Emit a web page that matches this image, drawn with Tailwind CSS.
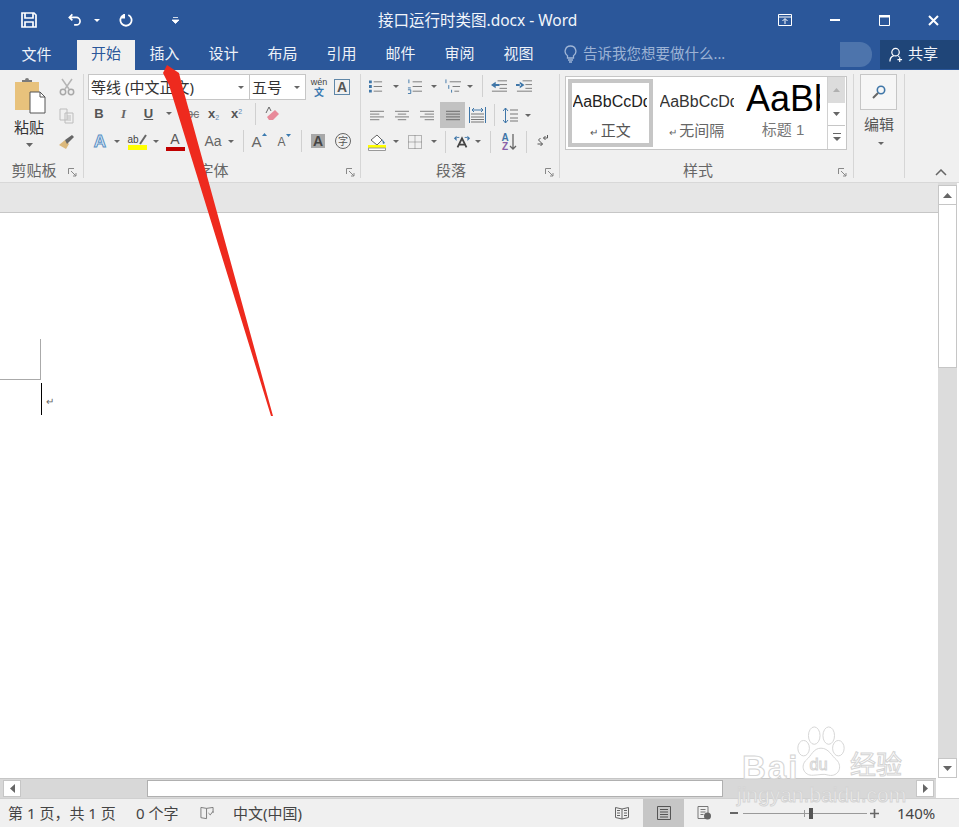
<!DOCTYPE html>
<html lang="zh-CN">
<head>
<meta charset="UTF-8">
<title>接口运行时类图.docx - Word</title>
<script src="https://cdn.jsdelivr.net/npm/@tailwindcss/browser@4"></script>
</head>
<body class="bg-white font-['Noto_Sans','Noto_Sans_CJK_SC',sans-serif]">
<div class="relative w-[959px] h-[827px] overflow-hidden flex flex-col">

  <!-- Title bar -->
  <header class="h-[40px] bg-[#2b579a] flex items-center text-white shrink-0 relative">
    <div class="w-[58px] flex justify-center">
      <svg width="16" height="16" viewBox="0 0 16 16"><path d="M1 1h12l2 2v12H1z" fill="none" stroke="#fff" stroke-width="1.7"/><path d="M4 1v5h8V1M4 15v-5h8v5" fill="none" stroke="#fff" stroke-width="1.7"/></svg>
    </div>
    <svg class="ml-[10px]" width="14" height="14" viewBox="0 0 16 15"><path d="M5 1 1.500 4.500 5 8M2 4.500h7.500a4.300 4.300 0 0 1 0 8.600H7" fill="none" stroke="#fff" stroke-width="1.900"/></svg>
    <svg class="ml-[12px]" width="6" height="3"><path d="M0 0h6L3 3z" fill="#fff"/></svg>
    <svg class="ml-[19px]" width="14" height="14" viewBox="0 0 15 15"><path d="M5 2.200A6 6 0 1 0 10 2.200M5.500 1v4H1.500" fill="none" stroke="#fff" stroke-width="1.900"/></svg>
    <svg class="ml-[39px]" width="7" height="7" viewBox="0 0 7 7"><path d="M1 .5h5M0 3h7L3.500 6.500z" stroke="#fff" stroke-width=".8" fill="#fff"/></svg>
    <div class="absolute left-[378px] top-[10px] text-[15.5px] leading-[20px] whitespace-nowrap text-[#f2f5fa]">接口运行时类图.docx - Word</div>
    <div class="ml-auto flex items-center">
      <div class="w-[50px] flex justify-center">
        <svg width="14" height="12" viewBox="0 0 14 12"><path d="M.500.500h13v11H.500zM.500 3h13" fill="none" stroke="#fff"/><path d="M7 10V5M4.500 7 7 4.500 9.500 7" fill="none" stroke="#fff"/></svg>
      </div>
      <div class="w-[49px] flex justify-center"><div class="w-[10px] h-[2px] bg-white"></div></div>
      <div class="w-[50px] flex justify-center">
        <svg width="11" height="11" viewBox="0 0 11 11"><path d="M.500.500h10v10H.500z" fill="none" stroke="#fff"/><path d="M0 0h11v2.500H0z" fill="#fff"/></svg>
      </div>
      <div class="w-[50px] pr-[2px] flex justify-center">
        <svg width="11" height="11" viewBox="0 0 11 11"><path d="M1 1l9 9M10 1l-9 9" stroke="#fff" stroke-width="2"/></svg>
      </div>
    </div>
  </header>

  <!-- Tabs -->
  <nav class="h-[30px] bg-[#2b579a] flex items-stretch text-[15px] text-[#eef2f8] shrink-0 relative">
    <div class="w-[7px]"></div>
    <div class="w-[59px] flex items-center justify-center pb-[1px]">文件</div>
    <div class="w-[11px]"></div>
    <div class="w-[58px] bg-[#f0f0f0] text-[#2b579a] flex items-center justify-center pb-[4px]">开始</div>
    <div class="w-[59px] flex items-center justify-center pb-[4px]">插入</div>
    <div class="w-[59px] flex items-center justify-center pb-[4px]">设计</div>
    <div class="w-[59px] flex items-center justify-center pb-[4px]">布局</div>
    <div class="w-[59px] flex items-center justify-center pb-[4px]">引用</div>
    <div class="w-[59px] flex items-center justify-center pb-[4px]">邮件</div>
    <div class="w-[59px] flex items-center justify-center pb-[4px]">审阅</div>
    <div class="w-[59px] flex items-center justify-center pb-[4px]">视图</div>
    <div class="w-[29px] flex items-center justify-end pb-[3px]">
      <svg width="13" height="18" viewBox="0 0 13 18"><path d="M6.500 1a5.300 5.300 0 0 0-3 9.700V13h6v-2.300a5.300 5.300 0 0 0-3-9.700zM4 15h5M5 17h3" fill="none" stroke="#9fb5d6" stroke-width="1.300"/></svg>
    </div>
    <div class="ml-[6px] text-[#9db3d5] flex items-center pb-[3px] text-[14.5px] whitespace-nowrap">告诉我您想要做什么...</div>
    <div class="absolute left-[840px] top-[2px] w-[32px] h-[25px] bg-[#4d74ac] rounded-r-[12px]"></div>
    <div class="absolute left-[880px] top-0 w-[79px] h-[29px] bg-[#1f4578] flex items-center pl-[9px] gap-[5px] text-[15px] text-[#f2f5fa]">
      <svg width="14" height="16" viewBox="0 0 15 16"><circle cx="7" cy="5" r="4" fill="none" stroke="#fff" stroke-width="1.300"/><path d="M1 15c0-3 2-5.500 4-6M10 9l1 1M9 13h5M11.500 10.500v5" fill="none" stroke="#fff" stroke-width="1.300"/></svg>
      <span class="pb-[2px]">共享</span>
    </div>
  </nav>

  <!-- Ribbon -->
  <div class="h-[112px] bg-[#f0f0f0] flex text-[#444] shrink-0">

    <!-- Clipboard -->
    <section class="w-[84px] h-[104px] mt-[4px] border-r border-[#d6d6d6] flex flex-col">
      <div class="flex h-[78px] shrink-0">
        <div class="w-[58px] flex flex-col items-center">
          <svg class="ml-[2px] mt-[4px]" width="32" height="36" viewBox="0 0 32 36"><path d="M1 4h24v28H1z" fill="#e8c27c"/><path d="M8 4h10V2h-3a2 2 0 0 0-4 0H8z" fill="#7b7b7b"/><path d="M16 14h10l5 5v16H16z" fill="#fff" stroke="#555"/><path d="M26 14v5h5" fill="none" stroke="#555"/></svg>
          <div class="text-[15px] leading-[18px] mt-[4px] text-[#333]">粘贴</div>
          <svg class="mt-[7px]" width="7" height="4"><path d="M0 0h7L3.500 4z" fill="#666"/></svg>
        </div>
        <div class="w-[17px] flex flex-col items-center pt-[4px] gap-[12px]">
          <svg width="16" height="18" viewBox="0 0 16 18"><path d="M3 1l7 10M13 1 6 11" stroke="#b5b5b5" stroke-width="1.500"/><circle cx="4" cy="14" r="2.700" fill="none" stroke="#a8a8a8" stroke-width="1.500"/><circle cx="12" cy="14" r="2.700" fill="none" stroke="#a8a8a8" stroke-width="1.500"/></svg>
          <svg width="16" height="16" viewBox="0 0 16 16"><path d="M1 1h7v11H1zM6 5h8v10H6z" fill="#f0f0f0" stroke="#bcbcbc"/><path d="M8 8h4M8 10h4M8 12h4" stroke="#bcbcbc"/></svg>
          <svg class="mt-[-1px]" width="17" height="15" viewBox="0 0 17 15"><path d="M1 10l6-5 4 4-3 5z" fill="#dcb97c"/><path d="M7 5l2 4 7-7-2-2z" fill="#666"/></svg>
        </div>
      </div>
      <div class="flex-1 min-h-0 flex items-start text-[15px] leading-[16px] text-[#666] pt-[10px]">
        <div class="flex-1 text-center">剪贴板</div>
        <svg class="mr-[6px] mt-[6px]" width="9" height="9" viewBox="0 0 9 9"><path d="M.500 6V.500H6M3 3l5 5M8 5v3H5" fill="none" stroke="#888"/></svg>
      </div>
    </section>

    <!-- Font -->
    <section class="w-[277px] h-[104px] mt-[4px] border-r border-[#d6d6d6] flex flex-col">
      <div class="h-[26px] shrink-0 flex items-center pl-[4px]">
        <div class="w-[162px] h-[26px] bg-white border border-[#c6c6c6] flex items-center justify-between pl-[2px] pr-[5px] text-[15px] text-[#333]">
          <span class="whitespace-nowrap">等线 (中文正文)</span>
          <svg width="6" height="3"><path d="M0 0h6L3 3z" fill="#666"/></svg>
        </div>
        <div class="w-[56px] h-[26px] bg-white border border-[#c6c6c6] border-l-0 flex items-center justify-between pl-[2px] pr-[5px] text-[15px] text-[#333]">
          <span>五号</span>
          <svg width="6" height="3"><path d="M0 0h6L3 3z" fill="#666"/></svg>
        </div>
        <div class="w-[24px] ml-[1px] flex flex-col items-center leading-none">
          <span class="text-[9px] text-[#444] font-['Liberation_Sans']">wén</span>
          <span class="text-[10px] text-[#3a7ab0] font-bold">文</span>
        </div>
        <div class="ml-[3px] w-[16px] h-[16px] border border-[#5f87a8] flex items-center justify-center text-[14px] font-bold text-[#555] font-['Liberation_Sans'] leading-none">A</div>
      </div>
      <div class="h-[27px] shrink-0 flex items-center pl-[3px] text-[#555] font-['Liberation_Sans']">
        <div class="w-[24px] text-center text-[13px] font-bold">B</div>
        <div class="w-[25px] text-center text-[13px] italic font-['Liberation_Serif'] font-bold text-[#666]">I</div>
        <div class="w-[25px] text-center text-[13px] font-bold underline">U</div>
        <div class="w-[16px] flex justify-center"><svg width="6" height="3"><path d="M0 0h6L3 3z" fill="#666"/></svg></div>
        <div class="w-[25px] text-center text-[12px] line-through text-[#777]">abc</div>
        <div class="w-[23px] text-center text-[13px] font-bold">x<sub class="text-[7px] text-[#5b87b5] font-normal">2</sub></div>
        <div class="w-[23px] text-center text-[13px] font-bold">x<sup class="text-[7px] text-[#5b87b5] font-normal">2</sup></div>
        <div class="w-[7px]"></div>
        <div class="w-px h-[22px] bg-[#d0d0d0]"></div>
        <div class="w-[32px] flex justify-center">
          <svg width="15" height="15" viewBox="0 0 15 15"><path d="M4 14l-2-3 8-7 4 4-6 6z" fill="#e88a9a"/><path d="M1 7l3-6 2 4" fill="none" stroke="#666"/></svg>
        </div>
      </div>
      <div class="h-[28px] shrink-0 flex items-center pl-[4px] text-[#555] font-['Liberation_Sans']">
        <div class="w-[24px] text-center text-[17px] font-bold leading-none text-[#e4eef8] [-webkit-text-stroke:1px_#5a90c4]">A</div>
        <div class="w-[10px] flex justify-center"><svg width="6" height="3"><path d="M0 0h6L3 3z" fill="#666"/></svg></div>
        <div class="w-[30px] flex flex-col items-center leading-none">
          <div class="flex items-end h-[12px]">
            <span class="text-[10px] text-[#444]">ab</span>
            <svg width="8" height="11" viewBox="0 0 8 11"><path d="M1 10 7 1" stroke="#666" stroke-width="2"/></svg>
          </div>
          <div class="w-[19px] h-[5px] bg-[#ffff00]"></div>
        </div>
        <div class="w-[8px] flex justify-center"><svg width="6" height="3"><path d="M0 0h6L3 3z" fill="#666"/></svg></div>
        <div class="w-[30px] flex flex-col items-center leading-none">
          <span class="text-[14px] h-[14px] text-[#555]">A</span>
          <div class="w-[19px] h-[4px] bg-[#c00000] mt-[1px]"></div>
        </div>
        <div class="w-[8px] flex justify-center"><svg width="6" height="3"><path d="M0 0h6L3 3z" fill="#666"/></svg></div>
        <div class="w-[30px] text-center text-[14px] text-[#666]">Aa</div>
        <div class="w-[6px] flex justify-center"><svg width="6" height="3"><path d="M0 0h6L3 3z" fill="#666"/></svg></div>
        <div class="w-[9px]"></div>
        <div class="w-px h-[22px] bg-[#d0d0d0]"></div>
        <div class="w-[30px] flex justify-center items-start text-[15px] text-[#666] leading-none">A<svg class="mt-[-1px]" width="5" height="3"><path d="M0 3h5L2.500 0z" fill="#3a7ab0"/></svg></div>
        <div class="w-[20px] flex justify-center items-start text-[12px] text-[#666] leading-none pt-[2px]">A<svg class="mt-[-2px]" width="5" height="3"><path d="M0 0h5L2.500 3z" fill="#3a7ab0"/></svg></div>
        <div class="w-[7px]"></div>
        <div class="w-px h-[22px] bg-[#d0d0d0]"></div>
        <div class="w-[32px] flex justify-center"><div class="w-[14px] h-[14px] bg-[#a8a8a8] text-[#444] text-[14px] font-bold flex items-center justify-center leading-none">A</div></div>
        <div class="w-[18px] flex justify-center"><div class="w-[16px] h-[16px] shrink-0 rounded-full border border-[#666] text-[10px] flex items-center justify-center leading-none text-[#555] font-['Noto_Sans_CJK_SC']">字</div></div>
      </div>
      <div class="flex-1 min-h-0 flex items-start text-[15px] leading-[16px] text-[#666] pt-[7px]">
        <div class="flex-1 text-center pr-[3px]">字体</div>
        <svg class="mr-[5px] mt-[6px]" width="9" height="9" viewBox="0 0 9 9"><path d="M.500 6V.500H6M3 3l5 5M8 5v3H5" fill="none" stroke="#888"/></svg>
      </div>
    </section>

    <!-- Paragraph -->
    <section class="w-[199px] h-[104px] mt-[4px] border-r border-[#d6d6d6] flex flex-col">
      <div class="h-[26px] shrink-0 flex items-center pb-[2px]">
        <div class="w-[22px] flex justify-end"><svg width="14" height="15" viewBox="0 0 15 15"><path d="M5 2.500h9M5 7.500h9M5 12.500h9" stroke="#777"/><path d="M0 1h3v3H0zM0 6h3v3H0zM0 11h3v3H0z" fill="#3f76a8"/></svg></div>
        <div class="w-[16px] flex justify-end"><svg width="6" height="3"><path d="M0 0h6L3 3z" fill="#666"/></svg></div>
        <div class="w-[23px] flex justify-end"><svg width="15" height="15" viewBox="0 0 16 15"><path d="M6 2.500h10M6 7.500h10M6 12.500h10" stroke="#777"/><path d="M2 0v4M1 9h3M1 11h3v4H1" fill="none" stroke="#3f76a8"/></svg></div>
        <div class="w-[15px] flex justify-end"><svg width="6" height="3"><path d="M0 0h6L3 3z" fill="#666"/></svg></div>
        <div class="w-[24px] flex justify-end"><svg width="16" height="15" viewBox="0 0 17 15"><path d="M5 2.500h12M8 7.500h8M10 12.500h5" stroke="#777"/><path d="M1 0v4M4 6v4M7 11v3" stroke="#3f76a8"/></svg></div>
        <div class="w-[12px] flex justify-end"><svg width="6" height="3"><path d="M0 0h6L3 3z" fill="#666"/></svg></div>
        <div class="w-[10px] flex justify-end"><div class="w-px h-[22px] bg-[#d0d0d0]"></div></div>
        <div class="w-[24px] flex justify-end"><svg width="16" height="14" viewBox="0 0 17 14"><path d="M7 1.500h10M9 5.500h8M9 9.500h8M1 12.500h16" stroke="#777"/><path d="M0 6 5 2.500v7zM4 5h5v2H4z" fill="#3f76a8"/></svg></div>
        <div class="w-[25px] flex justify-end"><svg width="16" height="14" viewBox="0 0 17 14"><path d="M7 1.500h10M10 5.500h7M10 9.500h7M1 12.500h16" stroke="#777"/><path d="M9 6 4 2.500v7zM0 5h5v2H0z" fill="#3f76a8"/></svg></div>
      </div>
      <div class="h-[26px] shrink-0 mt-[2px] flex items-center">
        <div class="w-[23px] flex justify-end"><svg width="14" height="11" viewBox="0 0 15 11"><path d="M0 1h15M0 4h10M0 7h15M0 10h10" stroke="#777"/></svg></div>
        <div class="w-[25px] flex justify-end"><svg width="14" height="11" viewBox="0 0 15 11"><path d="M0 1h15M3 4h9M0 7h15M3 10h9" stroke="#777"/></svg></div>
        <div class="w-[25px] flex justify-end"><svg width="14" height="11" viewBox="0 0 15 11"><path d="M0 1h15M5 4h10M0 7h15M5 10h10" stroke="#777"/></svg></div>
        <div class="w-[25px] ml-[6px] h-[26px] bg-[#c2c2c2] flex items-center justify-center"><svg width="14" height="11" viewBox="0 0 15 11"><path d="M0 1h15M0 4h15M0 7h15M0 10h15" stroke="#666"/></svg></div>
        <div class="w-[25px] flex justify-center"><svg width="17" height="16" viewBox="0 0 17 16"><path d="M.500 0v16M16.500 0v16" stroke="#3f76a8"/><path d="M2 7h13M2 10h13M2 12.500h13M2 15h13" stroke="#777"/><path d="M3 3h11M5 1 3 3l2 2M12 1l2 2-2 2" fill="none" stroke="#3f76a8"/></svg></div>
        <div class="w-[4px]"></div>
        <div class="w-px h-[22px] bg-[#d0d0d0]"></div>
        <div class="w-[30px] flex justify-center"><svg width="15" height="17" viewBox="0 0 15 17"><path d="M7 3h8M7 7h8M7 11h8M7 14h8" stroke="#777"/><path d="M2.500 1v15M0 4l2.500-3L5 4M0 13l2.500 3L5 13" fill="none" stroke="#3f76a8"/></svg></div>
        <div class="w-[6px] flex justify-center"><svg width="6" height="3"><path d="M0 0h6L3 3z" fill="#666"/></svg></div>
      </div>
      <div class="h-[27px] shrink-0 flex items-center">
        <div class="w-[26px] flex justify-end"><svg width="19" height="18" viewBox="0 0 19 18"><path d="M3 7l6-5 5 5-5 5z" fill="#fff" stroke="#666"/><path d="M14 6l3 4-2 1z" fill="#3f76a8"/><path d="M0 12h18v3H0z" fill="#ffff00"/><path d="M.500 15h17v2.500H.500z" fill="#fff" stroke="#999"/></svg></div>
        <div class="w-[12px] flex justify-end"><svg width="6" height="3"><path d="M0 0h6L3 3z" fill="#666"/></svg></div>
        <svg class="ml-[9px]" width="14" height="14" viewBox="0 0 14 14"><path d="M.500.500h13v13H.500zM7 .500v13M.500 7h13" fill="none" stroke="#777" stroke-dasharray="1 1"/></svg>
        <div class="w-[15px] flex justify-end"><svg width="6" height="3"><path d="M0 0h6L3 3z" fill="#666"/></svg></div>
        <div class="w-[9px] flex justify-end"><div class="w-px h-[22px] bg-[#d0d0d0]"></div></div>
        <svg class="ml-[7px]" width="18" height="17" viewBox="0 0 20 17"><path d="M5 15 10 5l5 10M7 12h6" fill="none" stroke="#444" stroke-width="2"/><path d="M1 5l3-3v6zM19 5l-3-3v6z" fill="#3f76a8"/><path d="M4 4h3M13 4h3" stroke="#3f76a8"/></svg>
        <svg class="ml-[4px]" width="6" height="3"><path d="M0 0h6L3 3z" fill="#666"/></svg>
        <div class="w-[10px] flex justify-end"><div class="w-px h-[22px] bg-[#d0d0d0]"></div></div>
        <div class="w-[8px] ml-[10px] flex flex-col items-center text-[10px] font-bold leading-[9px] font-['Liberation_Sans']"><span class="text-[#3f76a8]">A</span><span class="text-[#8a5fa8]">Z</span></div>
        <svg width="8" height="18" viewBox="0 0 8 18"><path d="M4 1v15M1 13l3 3 3-3" fill="none" stroke="#666" stroke-width="1.300"/></svg>
        <div class="w-[10px] flex justify-end"><div class="w-px h-[22px] bg-[#d0d0d0]"></div></div>
        <svg class="ml-[10px]" width="12" height="13" viewBox="0 0 11 13"><path d="M10 0v3H6M8 1 6 3l2 2" fill="none" stroke="#555"/><path d="M0 9h5M3 7l2 2-2 2M3 3l-2 2 2 2" fill="none" stroke="#555"/></svg>
      </div>
      <div class="flex-1 min-h-0 flex items-start text-[15px] leading-[16px] text-[#666] pt-[7px]">
        <div class="flex-1 text-center pr-[4px]">段落</div>
        <svg class="mr-[5px] mt-[6px]" width="9" height="9" viewBox="0 0 9 9"><path d="M.500 6V.500H6M3 3l5 5M8 5v3H5" fill="none" stroke="#888"/></svg>
      </div>
    </section>

    <!-- Styles -->
    <section class="w-[294px] h-[104px] mt-[4px] border-r border-[#d6d6d6] flex flex-col">
      <div class="pl-[5px] pt-[2px] h-[79px] shrink-0">
        <div class="w-[282px] h-[74px] bg-white border border-[#c6c6c6] flex">
          <div class="w-[85px] ml-[2px] mt-[2px] h-[68px] shrink-0 border-[4px] border-[#c6c6c6] flex flex-col items-center overflow-hidden">
            <div class="w-[74px] ml-[-2px] overflow-hidden whitespace-nowrap text-[16px] leading-[20px] mt-[9px] text-[#222] font-['Liberation_Sans']">AaBbCcDd</div>
            <div class="text-[15px] leading-[18px] mt-[9px] text-[#555] whitespace-nowrap"><span class="text-[10px]">↵ </span>正文</div>
          </div>
          <div class="w-[87px] mt-[2px] h-[68px] shrink-0 flex flex-col items-center overflow-hidden">
            <div class="w-[74px] overflow-hidden whitespace-nowrap text-[16px] leading-[20px] mt-[13px] text-[#333] font-['Liberation_Sans']">AaBbCcDd</div>
            <div class="text-[15px] leading-[18px] mt-[9px] text-[#666] whitespace-nowrap"><span class="text-[10px]">↵ </span>无间隔</div>
          </div>
          <div class="w-[86px] mt-[2px] h-[68px] shrink-0 flex flex-col items-center overflow-hidden">
            <div class="w-[74px] overflow-hidden whitespace-nowrap text-[36px] leading-[40px] text-black font-['Liberation_Sans']">AaBbC</div>
            <div class="text-[15px] leading-[18px] mt-[2px] text-[#777] whitespace-nowrap font-['Liberation_Sans','Noto_Sans_CJK_SC']">标题 1</div>
          </div>
          <div class="w-[18px] ml-[1px] flex flex-col border-l border-[#d0d0d0] shrink-0">
            <div class="h-[26px] bg-[#dcdcdc] flex items-center justify-center"><svg width="7" height="4"><path d="M0 4h7L3.500 0z" fill="#b0b0b0"/></svg></div>
            <div class="h-[23px] bg-white border-b border-[#c6c6c6] flex items-center justify-center"><svg width="7" height="4"><path d="M0 0h7L3.500 4z" fill="#666"/></svg></div>
            <div class="flex-1 bg-white flex items-center justify-center"><svg width="8" height="9" viewBox="0 0 8 9"><path d="M0 .500h8" stroke="#666"/><path d="M0 4h8L4 8z" fill="#666"/></svg></div>
          </div>
        </div>
      </div>
      <div class="flex-1 min-h-0 flex items-start text-[15px] leading-[16px] text-[#666] pt-[9px]">
        <div class="flex-1 text-center pr-[2px]">样式</div>
        <svg class="mr-[6px] mt-[6px]" width="9" height="9" viewBox="0 0 9 9"><path d="M.500 6V.500H6M3 3l5 5M8 5v3H5" fill="none" stroke="#888"/></svg>
      </div>
    </section>

    <!-- Editing -->
    <section class="w-[51px] h-[104px] mt-[4px] border-r border-[#d6d6d6] flex flex-col items-center">
      <div class="w-[37px] h-[36px] mr-[1px] border border-[#c6c6c6] bg-[#f6f6f6] flex items-center justify-center">
        <svg width="14" height="14" viewBox="0 0 14 14"><circle cx="9" cy="5" r="3.700" fill="none" stroke="#3f76a8" stroke-width="1.600"/><path d="M6 8l-5 5" stroke="#666" stroke-width="2"/></svg>
      </div>
      <div class="text-[15px] leading-[18px] mt-[5px] text-[#555]">编辑</div>
      <svg class="mt-[9px] ml-[3px]" width="6" height="3"><path d="M0 0h6L3 3z" fill="#666"/></svg>
    </section>

    <div class="flex-1 flex justify-end items-end pb-[6px] pr-[12px]">
      <svg width="12" height="7" viewBox="0 0 12 7"><path d="M1 6l5-5 5 5" fill="none" stroke="#666" stroke-width="1.500"/></svg>
    </div>
  </div>

  <!-- Document area -->
  <div class="flex-1 flex min-h-0 border-t border-[#d8d8d8]">
    <div class="flex-1 flex flex-col min-w-0">
      <div class="h-[30px] bg-[#e6e6e6] border-b border-[#c6c6c6] shrink-0"></div>
      <main class="flex-1 bg-white pt-[126px]">
        <div class="w-[41px] h-[41px] border-r border-b border-[#aaa]"></div>
        <div class="flex mt-[3px] ml-[41px] items-center">
          <div class="w-px h-[32px] bg-black"></div>
          <span class="text-[10px] text-[#666] ml-[4px] mt-[4px]">↵</span>
        </div>
      </main>
    </div>
    <!-- Vertical scrollbar -->
    <div class="w-[19px] mr-[2px] bg-[#dcdcdc] flex flex-col pt-[2px] shrink-0">
      <div class="h-[20px] bg-white border border-[#c6c6c6] flex items-center justify-center"><svg width="9" height="5"><path d="M0 5h9L4.500 0z" fill="#666"/></svg></div>
      <div class="h-[163px] bg-white border border-[#c6c6c6] border-t-0"></div>
      <div class="flex-1"></div>
      <div class="h-[20px] bg-white border border-[#c6c6c6] flex items-center justify-center"><svg width="9" height="5"><path d="M0 0h9L4.500 5z" fill="#666"/></svg></div>
    </div>
  </div>

  <!-- Horizontal scrollbar -->
  <div class="h-[20px] bg-white shrink-0">
    <div class="w-[936px] h-full bg-[#d8d8d8] flex pl-[3px] pr-[2px] py-px border-t border-[#c6c6c6]">
      <div class="w-[18px] bg-white border border-[#c6c6c6] flex items-center justify-center"><svg width="5" height="9"><path d="M5 0v9L0 4.500z" fill="#666"/></svg></div>
      <div class="w-[126px]"></div>
      <div class="w-[576px] bg-white border border-[#b0b0b0]"></div>
      <div class="flex-1"></div>
      <div class="w-[18px] bg-white border border-[#c6c6c6] flex items-center justify-center"><svg width="5" height="9"><path d="M0 0v9l5-4.500z" fill="#666"/></svg></div>
    </div>
  </div>

  <!-- Status bar -->
  <footer class="h-[29px] bg-[#f0f0f0] border-t border-[#d0d0d0] flex items-center text-[15px] text-[#444] shrink-0">
    <span class="ml-[8px] w-[128px] whitespace-nowrap">第 1 页，共 1 页</span>
    <span class="w-[64px] whitespace-nowrap">0 个字</span>
    <svg class="mt-[1px]" width="14" height="15" viewBox="0 0 15 15"><path d="M7 2 1 1v11l6 1zM7 2l7-1v6" fill="none" stroke="#777"/><path d="M9 7l2 2 3-4" fill="none" stroke="#777"/></svg>
    <span class="ml-[19px] whitespace-nowrap">中文(中国)</span>
    <div class="ml-auto flex items-center h-full">
      <svg width="14" height="14" viewBox="0 0 14 14"><path d="M.500 1.500 7 3l6.500-1.500v10L7 13 .500 11.500zM7 3v10M2 4.500h3M2 7h3M2 9.500h3M9 4.500h3M9 7h3M9 9.500h3" fill="none" stroke="#666"/></svg>
      <div class="ml-[14px] w-[41px] h-full bg-[#c6c6c6] flex items-center justify-center">
        <svg width="14" height="14" viewBox="0 0 14 14"><path d="M.500.500h13v13H.500zM3 3.500h8M3 6h8M3 8.500h8M3 11h8" fill="none" stroke="#555"/></svg>
      </div>
      <svg class="ml-[13px]" width="15" height="14" viewBox="0 0 14 14"><path d="M.500.500h10v12H.500zM3 3.500h5M3 6h5M3 8.500h3" fill="none" stroke="#777"/><circle cx="10" cy="10" r="3.500" fill="#666"/></svg>
      <div class="ml-[18px] flex items-center text-[#555]">
        <div class="w-[8px] h-[2px] bg-[#666]"></div>
        <div class="relative w-[124px] h-px bg-[#9a9a9a] mx-[5px]">
          <div class="absolute left-[61px] top-[-3px] w-px h-[7px] bg-[#9a9a9a]"></div>
          <div class="absolute left-[66px] top-[-5px] w-[4px] h-[11px] bg-[#555]"></div>
        </div>
        <svg class="ml-[-2px]" width="9" height="9" viewBox="0 0 9 9"><path d="M0 4.500h9M4.500 0v9" stroke="#666" stroke-width="1.600"/></svg>
      </div>
      <span class="ml-[18px] mr-[22px] w-[40px] whitespace-nowrap">140%</span>
    </div>
  </footer>

  <!-- Red arrow drawn over the screenshot -->
  <svg class="absolute inset-0 pointer-events-none" width="959" height="827" viewBox="0 0 959 827">
    <path d="M167 65 179 73 182 85 273 416H271L169 85 163 73z" fill="#ee2a1e"/>
  </svg>

  <!-- Baidu watermark -->
  <div class="absolute left-[742px] top-[725px] flex items-start text-white/80 [-webkit-text-stroke:1px_#d4d4d4] pointer-events-none font-['Liberation_Sans','Noto_Sans_CJK_SC',sans-serif]">
    <span class="text-[33px] leading-[34px] mt-[26px] font-bold tracking-[2px] w-[53px] whitespace-nowrap">Bai</span>
    <svg width="52" height="56" viewBox="0 0 52 58"><g fill="#fff" fill-opacity=".5" stroke="#d4d4d4"><ellipse cx="8" cy="24" rx="6" ry="8"/><ellipse cx="19" cy="11" rx="6" ry="9"/><ellipse cx="34" cy="11" rx="6" ry="9"/><ellipse cx="44" cy="24" rx="6" ry="8"/><path d="M26 24c-8 0-10 8-15 12-7 6-3 17 7 16 5 0 11-2 16 0 10 2 15-9 8-16-5-4-8-12-16-12z"/></g><text x="14" y="47" font-size="17" font-family="Liberation Sans" fill="#fff" stroke="#d4d4d4">du</text></svg>
    <span class="text-[26px] leading-[30px] mt-[25px] ml-[3px] whitespace-nowrap">经验</span>
  </div>
  <div class="absolute left-[737px] top-[780px] text-[21px] leading-[30px] text-white/70 [-webkit-text-stroke:1px_#d4d4d4] pointer-events-none font-['Liberation_Sans']">jingyan.baidu.com</div>
</div>
</body>
</html>
